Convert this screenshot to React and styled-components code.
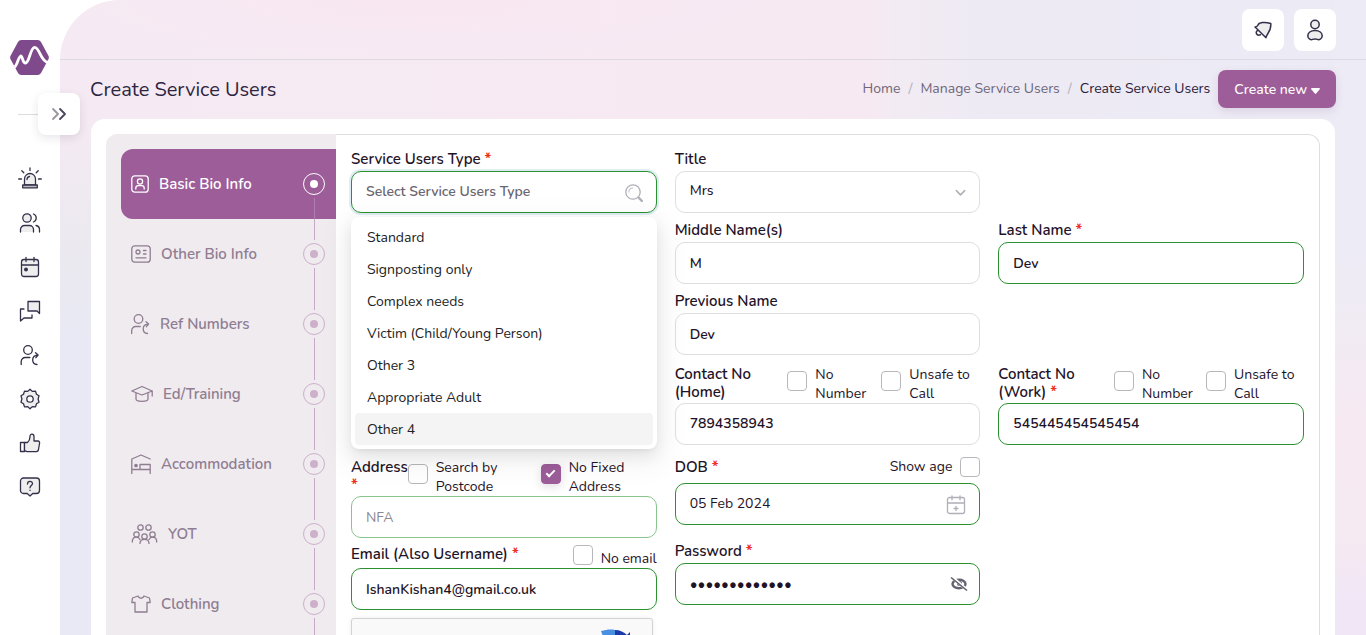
import React from 'react';
import styled, { createGlobalStyle, css } from 'styled-components';

const Global = createGlobalStyle`
  *, *::before, *::after { box-sizing: border-box; }
  body { margin: 0; background: #fff; color: #1f1328; font: 400 15px/18px Nunito, Lato, sans-serif; }
  button, input, select { font: inherit; color: inherit; }
`;

const Shell = styled.div`
  display: flex;
  height: 100vh;
  overflow: hidden;
`;

const Rail = styled.nav`
  position: relative;
  z-index: 5;
  flex: none;
  width: 60px;
  background: #fff;
`;
const LogoLink = styled.a`
  display: block;
  padding: 40px 0 0 10px;
  height: 114px;
  margin: 0;
`;
const RailRule = styled.hr`
  margin: 0 18px 52px;
  border: 0;
  border-top: 1px solid #dcdbe0;
`;
const RailToggle = styled.button`
  position: absolute;
  top: 93px;
  left: 38px;
  display: grid;
  place-items: center;
  width: 42px;
  height: 42px;
  padding: 0;
  border: 0;
  border-radius: 8px;
  background: #fff;
  box-shadow: 0 3px 10px rgba(60, 40, 80, 0.12);
`;
const RailList = styled.ul`
  display: grid;
  gap: 20px;
  margin: 0;
  padding: 0;
  list-style: none;
`;
const RailLink = styled.a`
  display: grid;
  place-items: center;
  height: 24px;
  color: #35304a;
`;

const Main = styled.main`
  flex: 1;
  min-width: 0;
  overflow-y: auto;
  scrollbar-width: none;
  border-top-left-radius: 60px;
  background:
    radial-gradient(ellipse 360px 60px at 27% 0, rgba(250, 230, 241, 0.7), transparent),
    linear-gradient(to bottom, transparent 110px, #ebe9ef 250px, #e9e9f5 340px, #e9e9f5) left / 32px 100% no-repeat,
    linear-gradient(to bottom, #edebf6 130px, #edebf6 250px, #f1ebf3 330px, #f6e9f2 420px, #f5e9f2 540px, #f1e6f5 600px) right / 32px 100% no-repeat,
    linear-gradient(to right, #f5eaf3 0, #f7e9f2 62%, #f2ebf3 64%, #edeaf4 72%, #ecebf5);
`;
const TopBar = styled.header`
  display: flex;
  justify-content: flex-end;
  align-items: center;
  gap: 10px;
  height: 60px;
  padding: 0 30px;
  border-bottom: 1px solid #dfd9e1;
`;
const TopButton = styled.button`
  display: grid;
  place-items: center;
  width: 42px;
  height: 42px;
  padding: 0;
  border: 0;
  border-radius: 8px;
  background: #fff;
  color: #35304a;
`;
const TitleBar = styled.div`
  display: flex;
  align-items: center;
  padding: 10px 30px 11px;
`;
const PageTitle = styled.h1`
  flex: 1;
  margin: 0;
  padding-top: 2px;
  font-size: 20px;
  line-height: 28px;
  font-weight: 400;
  color: #2d2540;
`;
const Crumbs = styled.ol`
  display: flex;
  margin: 0 8px 0 0;
  padding: 0;
  list-style: none;
  font-size: 14px;
  line-height: 20px;
  li + li::before { content: '/'; padding: 0 8px; color: #b5afbb; }
`;
const CrumbLink = styled.a`
  text-decoration: none;
  color: #6f6779;
  &[aria-current] { color: #2a2139; }
`;
const CreateButton = styled.button`
  display: flex;
  align-items: center;
  gap: 4px;
  height: 38px;
  padding: 1px 16px 0;
  border: 0;
  border-radius: 8px;
  background: #9c5d99;
  color: #fff;
  font-size: 14px;
  font-weight: 500;
  box-shadow: 0 3px 8px rgba(120, 70, 130, 0.15);
`;

const Card = styled.section`
  margin: 0 31px 0 31px;
  padding: 15px;
  border-radius: 14px;
  background: #fff;
`;
const Wizard = styled.div`
  display: flex;
  min-height: 720px;
  border: 1px solid #dedde0;
  border-left: 0;
  border-radius: 12px;
`;
const Steps = styled.ol`
  flex: none;
  width: 230px;
  margin: -1px 0 0;
  padding: 15px 0 0 15px;
  border-radius: 12px 0 0 12px;
  background: #f0ebef;
  list-style: none;
`;
const StepItem = styled.li`
  position: relative;
  &::after {
    content: '';
    position: absolute;
    top: 49px;
    right: 21px;
    width: 1px;
    height: 42px;
    background: #c9a9c8;
    z-index: 1;
  }
  &:first-child::after { background: linear-gradient(#af7dad 21px, #c9a9c8 21px); }
`;
const StepLink = styled.a`
  display: flex;
  align-items: center;
  gap: 10px;
  height: 70px;
  padding: 0 11px 0 10px;
  border-radius: 12px 0 0 12px;
  text-decoration: none;
  font-weight: 600;
  color: ${(p) => (p.$active ? '#fff' : '#8f7d92')};
  background: ${(p) => (p.$active ? '#9c5d99' : 'transparent')};
`;
const StepDot = styled.span`
  display: grid;
  place-items: center;
  width: 22px;
  height: 22px;
  margin-left: auto;
  border: 1px solid ${(p) => (p.$active ? '#fff' : '#cdb0cc')};
  border-radius: 50%;
  &::after {
    content: '';
    width: 8px;
    height: 8px;
    border-radius: 50%;
    background: ${(p) => (p.$active ? '#fff' : '#cdb0cc')};
  }
`;

const Form = styled.form`
  flex: 1;
  min-width: 0;
  padding: 14px 15px;
`;
const Row = styled.div`
  display: grid;
  grid-template-columns: repeat(3, 1fr);
  align-items: start;
  column-gap: 18px;
  margin-bottom: ${(p) => (p.$tight ? 3 : 7)}px;
`;
const Field = styled.div`
  position: relative;
  grid-column: ${(p) => p.$col};
  min-width: 0;
`;
const FieldHead = styled.div`
  display: flex;
  align-items: ${(p) => p.$align || 'flex-start'};
  height: ${(p) => p.$h || 22}px;
  padding: ${(p) => p.$top || 1}px 0 ${(p) => p.$bottom || 0}px;
`;
const Label = styled.label`
  flex: 1;
  min-width: 0;
  font-size: 15px;
  line-height: 18px;
  font-weight: 600;
`;
const Star = styled.span`
  color: #ee2f24;
  font-weight: 700;
`;
const Checks = styled.div`
  display: grid;
  flex: none;
  grid-template-columns: ${(p) => p.$cols};
`;
const Check = styled.input.attrs({ type: 'checkbox' })`
  appearance: none;
  display: grid;
  place-items: center;
  align-self: flex-start;
  flex: none;
  width: 20px;
  height: 20px;
  margin: ${(p) => (p.$drop ? 6 : 0)}px 0 0;
  border: 1px solid #b9b7bc;
  border-radius: 4px;
  background: #fff;
  &:checked { border-color: #9c5d99; background: #9c5d99; box-shadow: 0 3px 8px rgba(80, 40, 90, 0.15); }
  &:checked::after {
    content: '';
    width: 9px;
    height: 5px;
    margin-bottom: 3px;
    border: solid #fff;
    border-width: 0 0 2px 2px;
    transform: rotate(-45deg);
  }
`;
const CheckLabel = styled.label`
  display: flex;
  align-items: ${(p) => (p.$single ? 'flex-end' : 'flex-start')};
  flex-direction: ${(p) => (p.$flip ? 'row-reverse' : 'row')};
  gap: 8px;
  font-size: 14px;
  line-height: 19px;
`;
const control = css`
  display: block;
  width: 100%;
  height: 42px;
  padding: 0 44px 0 14px;
  border: 1px solid ${(p) => (p.$valid ? '#2b9130' : '#dedde0')};
  border-radius: 10px;
  outline: 0;
  background: #fff;
  font-size: 14px;
  font-weight: ${(p) => p.$weight || 600};
  color: #1f1328;
  &::placeholder { color: #6a6570; opacity: 1; }
  &:disabled { border-color: #8ac48d; }
  &:disabled::placeholder { color: #8b8790; }
  &[role='combobox'], &[type='tel'], &[data-picker] { padding-bottom: 2px; }
  &[type='password'] { font-size: 15px; }
`;
const TextInput = styled.input`
  ${control}
  ${(p) => p.$focus && 'box-shadow: 0 0 0 2px #dfeef5;'}
`;
const SelectInput = styled.select`
  ${control}
  padding-bottom: 2px;
  appearance: none;
`;
const ControlBox = styled.div`
  position: relative;
`;
const Adornment = styled.span`
  position: absolute;
  inset: 2px 14px 0 auto;
  display: grid;
  place-items: center;
  color: #b1afb8;
  pointer-events: none;
`;
const EyeButton = styled.button`
  position: absolute;
  inset: 0 12px 0 auto;
  display: grid;
  place-items: center;
  padding: 0;
  border: 0;
  background: none;
  color: #66616e;
`;
const Menu = styled.ul`
  position: absolute;
  z-index: 10;
  top: 100%;
  left: 0;
  right: 0;
  margin: 4px 0 0;
  padding: 4px;
  border-radius: 8px;
  background: #fff;
  box-shadow: 0 6px 16px rgba(0, 0, 0, 0.08), 0 3px 6px -4px rgba(0, 0, 0, 0.12), 0 9px 28px 8px rgba(0, 0, 0, 0.05);
  list-style: none;
`;
const Option = styled.li`
  padding: 6px 12px 4px;
  border-radius: 4px;
  font-size: 14px;
  line-height: 22px;
  color: #222;
  background: ${(p) => (p.$active ? '#f4f4f4' : 'transparent')};
`;
const Captcha = styled.div`
  display: flex;
  justify-content: flex-end;
  width: 302px;
  height: 76px;
  margin-top: 8px;
  padding: 10px 20px;
  border: 1px solid #d3d3d3;
  border-radius: 3px;
  background: #f9f9f9;
  box-shadow: 0 0 4px rgba(0, 0, 0, 0.08);
`;

function Icon({ w = 22, h = 22, box = '0 0 22 22', sw = 1.3, children }) {
  return (
    <svg width={w} height={h} viewBox={box} fill="none" stroke="currentColor" strokeWidth={sw} strokeLinecap="round" strokeLinejoin="round" aria-hidden="true">
      {children}
    </svg>
  );
}

const personForward = (
  <>
    <circle cx="9" cy="6" r="4.3" />
    <path d="M2.200 20.500v-3a4 4 0 0 1 4-4h4.600" />
    <path d="M18 20.500c-5.500-.4-6.200-8.700.6-9.300M16.500 8.800l2.600 2.300-2.200 2.600" />
  </>
);

const railItems = [
  ['Alerts', <Icon w={24} h={24} box="0 0 24 24"><path d="M6.500 18v-6a5.500 5.500 0 0 1 11 0v6z" fill="#eee" /><path d="M4.700 18h14.600v2.800H4.700z" fill="#bbb" /><path d="M9 12.500a3.200 3.200 0 0 1 2.500-3M12 1v2.600M3.800 3.800l2 2M20.200 3.800l-2 2M.7 12h2.800M20.500 12h2.800" /></Icon>],
  ['People', <Icon><circle cx="8" cy="6" r="4.200" fill="#eee" /><path d="M1.500 20v-2.500a4 4 0 0 1 4-4h5a4 4 0 0 1 4 4V20" fill="#eee" /><path d="M14.500 2a4.300 4.300 0 0 1 0 8M17 13.500c2.300.5 3.500 1.800 3.500 4V20" /></Icon>],
  ['Calendar', <Icon><rect x="2.500" y="3.500" width="17" height="17" rx="2.500" fill="#eee" /><path d="M2.500 9h17M7 1.500v4M15 1.500v4" /><circle cx="7" cy="13.500" r="1.300" fill="currentColor" /></Icon>],
  ['Messages', <Icon><path d="M9 1.500h11.500v12L18 11H9z" fill="#eee" /><path d="M5 9H1.500v12L5 18h8v-3" fill="none" /></Icon>],
  ['Referrals', <Icon>{personForward}</Icon>],
  ['Settings', <Icon><path d="M11 1.200l2.300 2.200 3.200-.3 1 3.100 2.500 1.600-.9 3.200.9 3.200-2.500 1.600-1 3.100-3.200-.3L11 20.800l-2.300-2.200-3.200.3-1-3.100L2 14.200l.9-3.200L2 7.800l2.500-1.600 1-3.100 3.200.3z" fill="#eee" /><circle cx="11" cy="11" r="3.200" fill="#fff" /></Icon>],
  ['Feedback', <Icon><path d="M1.500 10.500h4v9h-4z" /><path d="M5.500 10.500h3c1.700-1.400 2.500-3.300 2.500-6 0-3.400 4-3 4 0v4.500h4a1.700 1.700 0 0 1 1.600 2l-1.200 7a2 2 0 0 1-2 1.600H8l-2.500-1z" fill="#eee" /></Icon>],
  ['Help', <Icon><path d="M4.500 2h13a3 3 0 0 1 3 3v9.500a3 3 0 0 1-3 3h-3.700L11 20l-2.800-2.500H4.500a3 3 0 0 1-3-3V5a3 3 0 0 1 3-3z" fill="#eee" /><path d="M8.500 8c0-3.500 5-3.400 5-.4 0 2-2.500 2-2.500 4.200M11 14.200v.2" /></Icon>],
];

const steps = [
  ['Basic Bio Info', <Icon w={18} h={20} box="0 0 18 20"><rect x=".8" y="1.800" width="16.400" height="16.400" rx="3" /><circle cx="9" cy="7.500" r="2.600" /><path d="M4.800 15v-1c0-1.700 1-2.300 2.500-2.300h3.400c1.500 0 2.500.6 2.500 2.300v1" /></Icon>],
  ['Other Bio Info', <Icon w={20} h={20} box="0 0 20 20"><rect x=".8" y="1.800" width="18.400" height="16.400" rx="3" /><circle cx="7" cy="8" r="2" /><path d="M5 13.800h10M12.500 6.500H15M12.500 10H15" /></Icon>],
  ['Ref Numbers', <Icon w={19} h={22} box="1.500 0 19 22">{personForward}</Icon>],
  ['Ed/Training', <Icon w={22} h={20} box="0 0 22 20"><path d="M.8 7L11 2.500 21.200 7 11 11zM5 9v6c0 1.500 3 2.300 6 2.300s6-.8 6-2.300V9M21.200 7v5" /></Icon>],
  ['Accommodation', <Icon w={20} h={20} box="0 0 20 20"><path d="M.8 19.500V5L10 1l9.200 4M.8 15.500h18.400M19.200 19.500v-9H9v5" /><circle cx="5" cy="11.500" r="1.200" fill="currentColor" /></Icon>],
  ['YOT', <Icon w={27} h={20} box="0 0 26 20"><circle cx="9" cy="3.500" r="2.700" /><circle cx="17" cy="3.500" r="2.700" /><circle cx="5" cy="10.500" r="2.700" /><circle cx="13" cy="12.500" r="2.700" /><circle cx="21" cy="10.500" r="2.700" /><path d="M.8 18c0-6 6-6 7.700-2.500M25.200 18c0-6-6-6-7.700-2.500M8.500 19.500c0-5.500 9-5.500 9 0" /></Icon>],
  ['Clothing', <Icon w={20} h={20} box="0 0 20 20"><path d="M7 2c1 3 5 3 6 0l5.500 2 .7 4.500H16V18H4V8.500H.8L1.500 4z" /></Icon>],
];

const userTypes = ['Standard', 'Signposting only', 'Complex needs', 'Victim (Child/Young Person)', 'Other 3', 'Appropriate Adult', 'Other 4'];

const Req = () => <Star>*</Star>;

function TextField({ id, col, label, required, valid, value }) {
  return (
    <Field $col={col}>
      <FieldHead><Label htmlFor={id}>{label} {required && <Req />}</Label></FieldHead>
      <TextInput id={id} defaultValue={value} $valid={valid} />
    </Field>
  );
}

function ContactField({ id, col, name, required, value, cols }) {
  return (
    <Field $col={col}>
      <FieldHead $h={41} $top={3}>
        <Label htmlFor={id}>Contact No ({name}) {required && <Req />}</Label>
        <Checks $cols={cols}>
          <CheckLabel><Check $drop />No Number</CheckLabel>
          <CheckLabel><Check $drop />Unsafe to Call</CheckLabel>
        </Checks>
      </FieldHead>
      <TextInput id={id} type="tel" defaultValue={value} $valid={required} />
    </Field>
  );
}

export default function App() {
  return (
    <>
      <Global />
      <Shell>
        <Rail aria-label="Main">
          <LogoLink href="#" aria-label="Dashboard">
            <svg width="39" height="35" viewBox="0 0 39 35" aria-hidden="true">
              <path d="M11.500 0h16a4 4 0 0 1 3.500 2l7.300 13.500a4 4 0 0 1 0 4L31 33a4 4 0 0 1-3.500 2h-16A4 4 0 0 1 8 33L.7 19.500a4 4 0 0 1 0-4L8 2a4 4 0 0 1 3.500-2z" fill="#7f4a8c" />
              <path d="M4.500 27c3-1.500 3.500-10 6.300-11 1.700 0 1.700 7 4.700 7 4 0 4.700-15.700 9.200-15.700 4.800 0 6 14.200 13.300 15.200" fill="none" stroke="#fff" strokeWidth="2.800" />
            </svg>
          </LogoLink>
          <RailRule />
          <RailList>
            {railItems.map(([name, icon]) => (
              <li key={name}><RailLink href="#" aria-label={name}>{icon}</RailLink></li>
            ))}
          </RailList>
          <RailToggle type="button" aria-label="Expand menu">
            <Icon w={16} h={14} box="0 0 16 14" sw={1.800}>
              <path d="M2 2l5 5-5 5" opacity=".45" />
              <path d="M9 2l5 5-5 5" stroke="#4a455c" />
            </Icon>
          </RailToggle>
        </Rail>

        <Main>
          <TopBar>
            <TopButton type="button" aria-label="Notifications">
              <Icon w={20} h={20} box="0 0 20 20" sw={1.500}><path d="M2 7l11 10.800c-.5-3 5.500-5.500 4.800-14.300C11 1.500 6 2.500 5 5 4.300 6.700 3.500 7 2 7z" fill="#eee" /><path d="M4.800 10.500c-3 1-1.500 6 2.700 4.300" /></Icon>
            </TopButton>
            <TopButton type="button" aria-label="Account">
              <Icon w={18} h={22} box="0 0 18 22" sw={1.500}><circle cx="9" cy="5.500" r="4.200" fill="#eee" /><path d="M9 11.500c4.500 0 7.200 2.300 7.200 5.300 0 3.400-3.400 4.500-4.800 3.600-.7-.4-4.100-.4-4.800 0-1.400.9-4.800-.2-4.800-3.600 0-3 2.700-5.300 7.200-5.300z" fill="#eee" /></Icon>
            </TopButton>
          </TopBar>
          <TitleBar>
            <PageTitle>Create Service Users</PageTitle>
            <nav aria-label="Breadcrumb">
              <Crumbs>
                <li><CrumbLink href="#">Home</CrumbLink></li>
                <li><CrumbLink href="#">Manage Service Users</CrumbLink></li>
                <li><CrumbLink href="#" aria-current="page">Create Service Users</CrumbLink></li>
              </Crumbs>
            </nav>
            <CreateButton type="button">
              Create new
              <svg width="9" height="9" viewBox="0 -3 9 9" aria-hidden="true"><path d="M.8 0h7.400q1 .4.500 1.200L5.200 5.500q-.7.700-1.400 0L.3 1.200Q-.2.400.8 0z" fill="#fff" /></svg>
            </CreateButton>
          </TitleBar>

          <Card>
            <Wizard>
              <Steps>
                {steps.map(([name, icon], i) => (
                  <StepItem key={name}>
                    <StepLink href="#" $active={i === 0} aria-current={i === 0 ? 'step' : undefined}>
                      {icon}{name}<StepDot $active={i === 0} />
                    </StepLink>
                  </StepItem>
                ))}
              </Steps>

              <Form>
                <Row>
                  <Field $col={1}>
                    <FieldHead><Label htmlFor="type">Service Users Type <Req /></Label></FieldHead>
                    <ControlBox>
                      <TextInput id="type" role="combobox" aria-expanded="true" aria-controls="type-menu" placeholder="Select Service Users Type" $valid $focus />
                      <Adornment><Icon w={18} h={18} box="0 0 18 18"><circle cx="8" cy="8" r="7.200" /><path d="M4 8a4 4 0 0 1 3.500-4" opacity=".6" /><path d="M13.500 13.500l3.300 3.300" strokeWidth="2.400" /></Icon></Adornment>
                    </ControlBox>
                    <Menu id="type-menu" role="listbox">
                      {userTypes.map((t) => (
                        <Option key={t} role="option" aria-selected={t === 'Other 4'} $active={t === 'Other 4'}>{t}</Option>
                      ))}
                    </Menu>
                  </Field>
                  <Field $col={2}>
                    <FieldHead><Label htmlFor="title">Title</Label></FieldHead>
                    <ControlBox>
                      <SelectInput id="title" $weight={500}><option>Mrs</option></SelectInput>
                      <Adornment><Icon w={11} h={8} box="0 0 12 8" sw={1.800}><path d="M1.500 1.500L6 6l4.500-4.500" /></Icon></Adornment>
                    </ControlBox>
                  </Field>
                </Row>
                <Row>
                  <TextField id="middle" col={2} label="Middle Name(s)" value="M" />
                  <TextField id="last" col={3} label="Last Name" required valid value="Dev" />
                </Row>
                <Row>
                  <TextField id="previous" col={2} label="Previous Name" value="Dev" />
                </Row>
                <Row>
                  <ContactField id="home" col={2} name="Home" value="7894358943" cols="94px 99px" />
                  <ContactField id="work" col={3} name="Work" required value="545445454545454" cols="92px 98px" />
                </Row>
                <Row $tight>
                  <Field $col={1}>
                    <FieldHead $h={44} $top={6}>
                      <Label htmlFor="address">Address <Req /></Label>
                      <Checks $cols="133px 116px">
                        <CheckLabel><Check $drop />Search by Postcode</CheckLabel>
                        <CheckLabel><Check $drop defaultChecked />No Fixed Address</CheckLabel>
                      </Checks>
                    </FieldHead>
                    <TextInput id="address" placeholder="NFA" disabled $weight={400} />
                  </Field>
                  <Field $col={2}>
                    <FieldHead $h={31} $top={5} $bottom={6} $align="center">
                      <Label htmlFor="dob">DOB <Req /></Label>
                      <CheckLabel $flip><Check />Show age</CheckLabel>
                    </FieldHead>
                    <ControlBox>
                      <TextInput id="dob" data-picker defaultValue="05 Feb 2024" $valid $weight={400} />
                      <Adornment><Icon w={20} h={20} box="0 0 20 20"><rect x="1.500" y="2.500" width="17" height="16" rx="2" /><path d="M1.500 8h17M6 .8v4M14 .8v4M10 11.500v4M8 13.500h4" /></Icon></Adornment>
                    </ControlBox>
                  </Field>
                </Row>
                <Row>
                  <Field $col={1}>
                    <FieldHead $h={27} $top={4} $align="stretch">
                      <Label htmlFor="email">Email (Also Username) <Req /></Label>
                      <CheckLabel $single><Check />No email</CheckLabel>
                    </FieldHead>
                    <TextInput id="email" defaultValue="IshanKishan4@gmail.co.uk" $valid />
                    <Captcha>
                      <svg width="34" height="34" viewBox="0 0 34 34" aria-hidden="true">
                        <path d="M17 1v9L5 7.500 3 2C8 1 12 0 17 1z" fill="#4a90e2" />
                        <path d="M17 1c5 0 9 2 12 5l3-3v14H19l5-5c-2-3-4-4-7-4z" fill="#1c3aa9" />
                      </svg>
                    </Captcha>
                  </Field>
                  <Field $col={2}>
                    <FieldHead><Label htmlFor="password">Password <Req /></Label></FieldHead>
                    <ControlBox>
                      <TextInput id="password" type="password" defaultValue="Password12345" $valid />
                      <EyeButton type="button" aria-label="Show password">
                        <svg width="18" height="14" viewBox="0 0 18 14" aria-hidden="true">
                          <ellipse cx="9" cy="7" rx="6.500" ry="4.200" fill="none" stroke="currentColor" strokeWidth="2.400" />
                          <circle cx="9.500" cy="6.500" r="2.500" fill="currentColor" />
                          <path d="M2 0l15 13" stroke="#fff" strokeWidth="3" />
                          <path d="M1 .5l16 13" stroke="currentColor" strokeWidth="1.500" />
                        </svg>
                      </EyeButton>
                    </ControlBox>
                  </Field>
                </Row>
              </Form>
            </Wizard>
          </Card>
        </Main>
      </Shell>
    </>
  );
}
